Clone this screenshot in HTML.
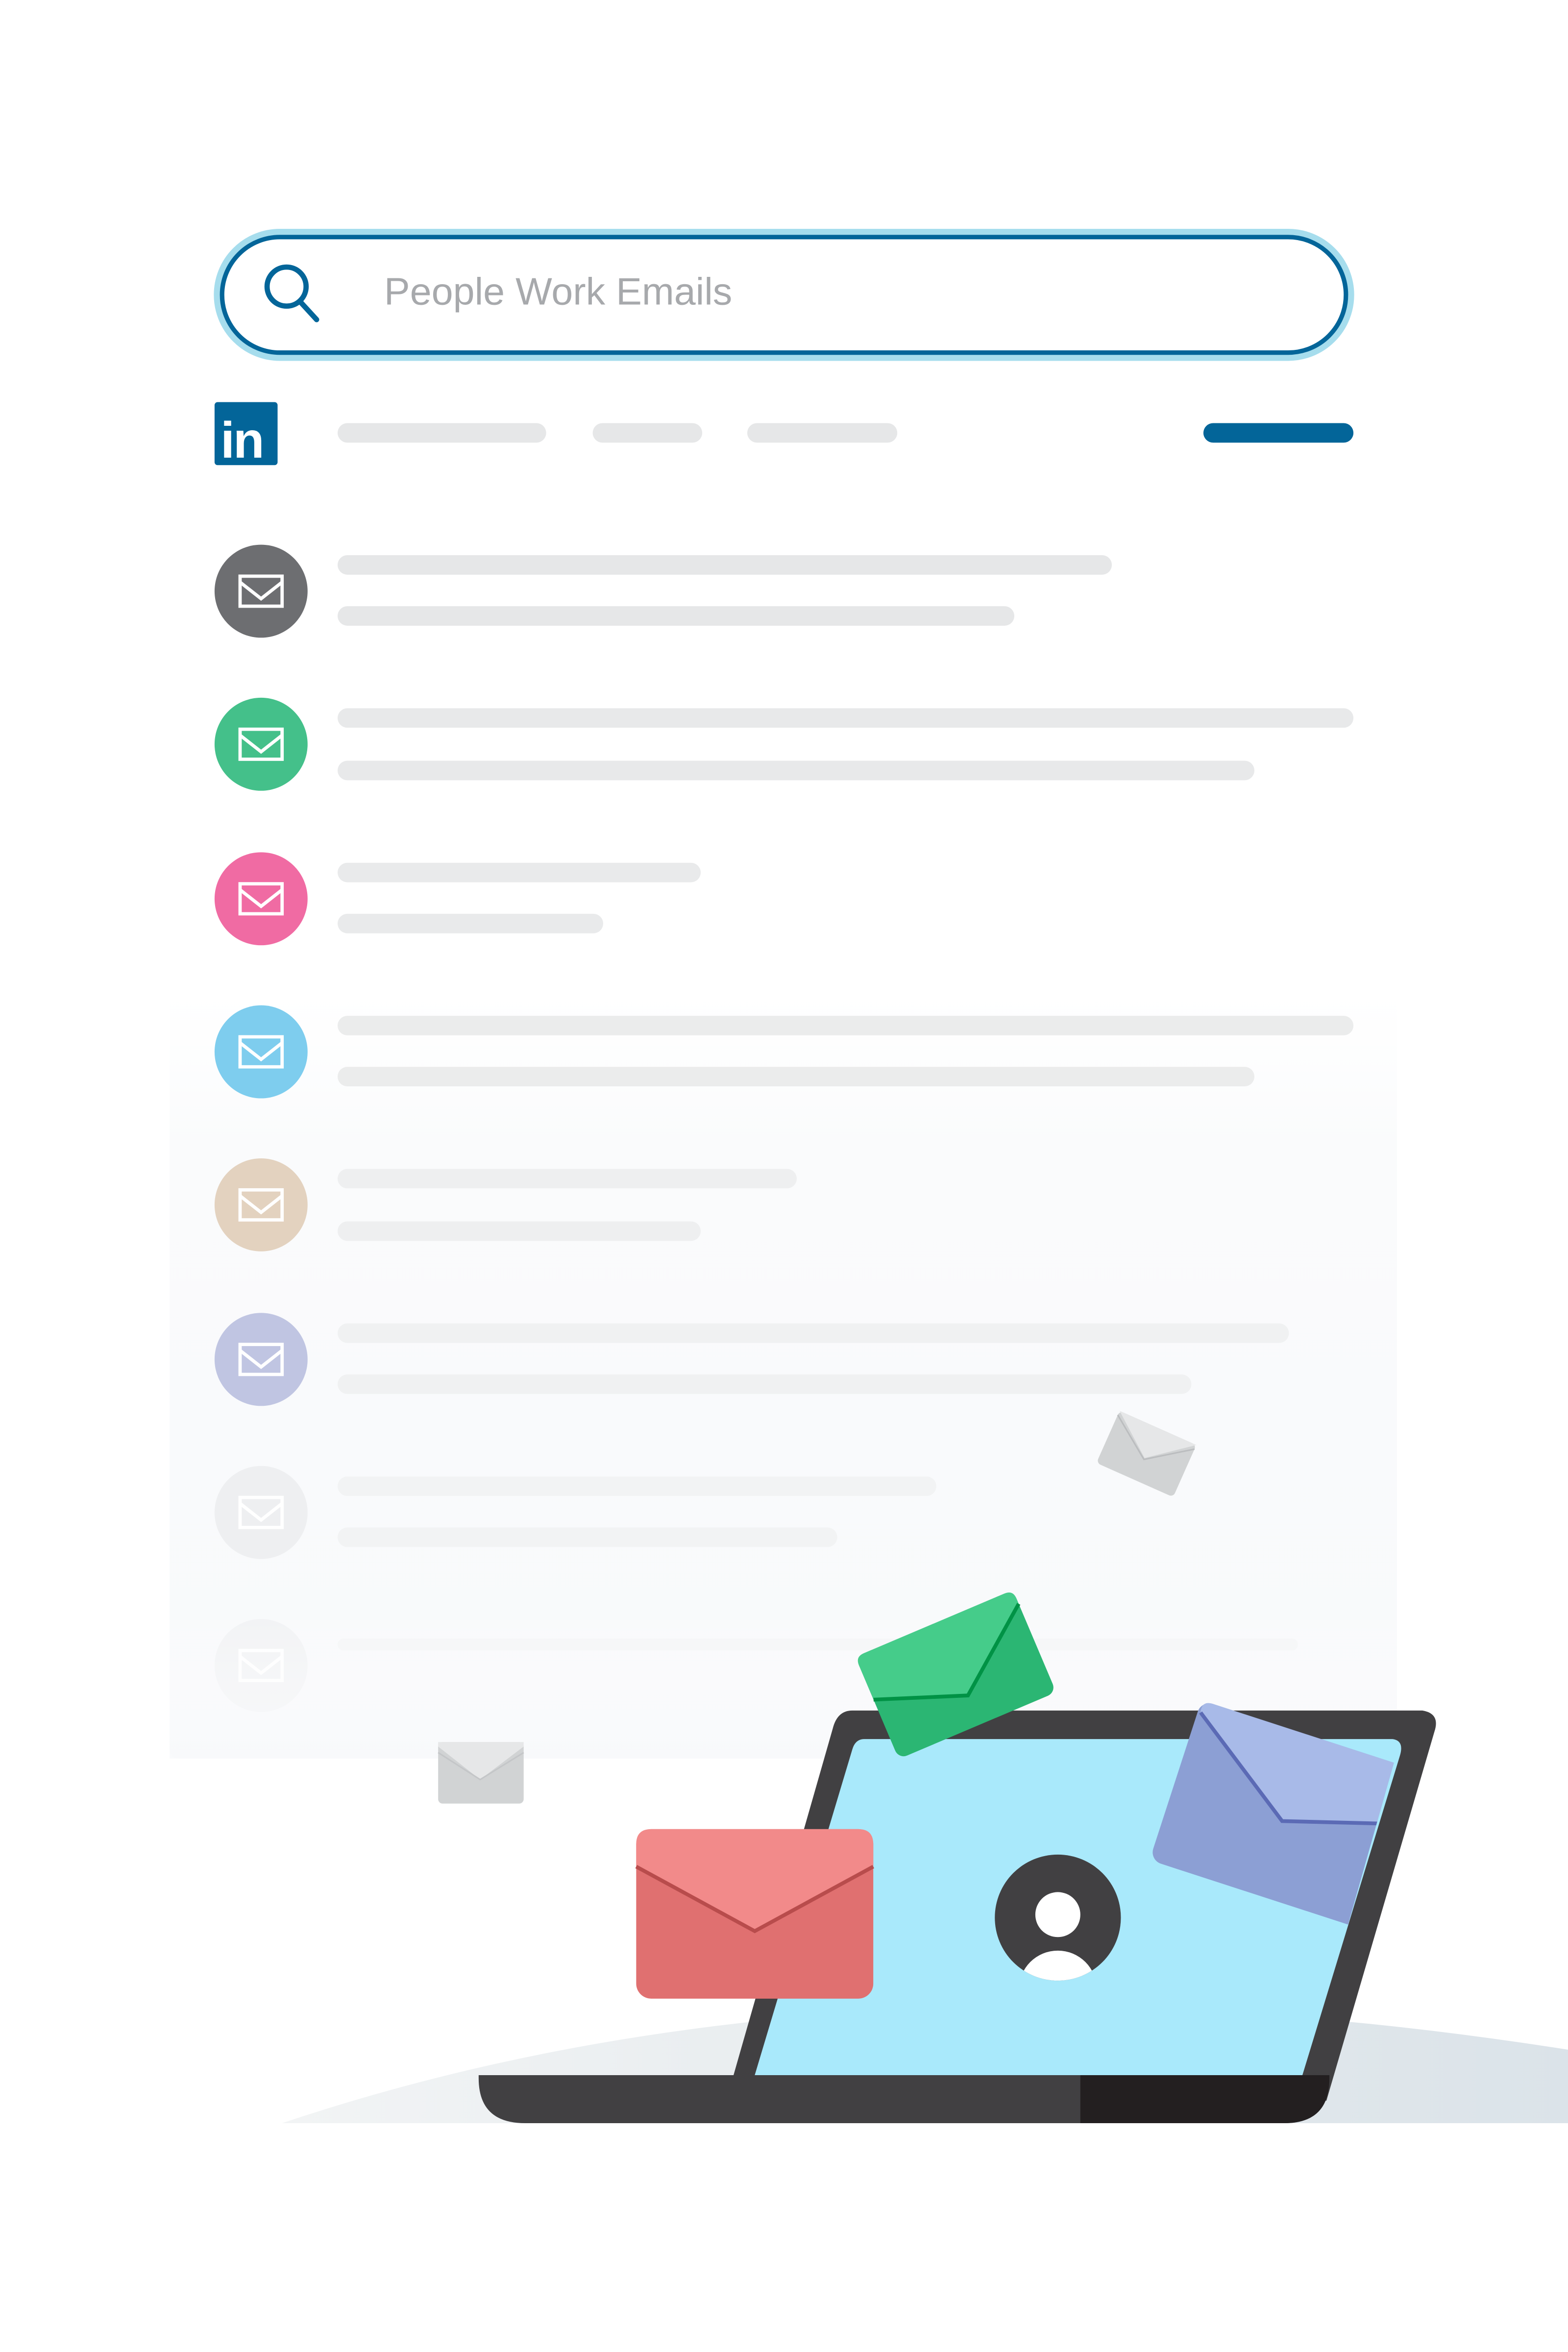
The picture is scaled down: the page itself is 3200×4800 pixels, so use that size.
<!DOCTYPE html>
<html><head><meta charset="utf-8"><style>html,body{margin:0;padding:0;background:#fff}svg{display:block}</style></head>
<body>
<svg width="3200" height="4800" viewBox="0 0 1045 1567.5" preserveAspectRatio="none" xmlns="http://www.w3.org/2000/svg">
<defs>
<linearGradient id="pan" x1="0" y1="0" x2="0" y2="1"><stop offset="0" stop-color="#fbfcfd" stop-opacity="0"/><stop offset="0.2" stop-color="#fafbfc"/><stop offset="1" stop-color="#f8f9fb"/></linearGradient>
<linearGradient id="gr" x1="0" y1="0" x2="1" y2="0"><stop offset="0" stop-color="#f2f4f5"/><stop offset="0.5" stop-color="#e6ebee"/><stop offset="1" stop-color="#dbe3e9"/></linearGradient>
<linearGradient id="fade" x1="0" y1="0" x2="0" y2="1"><stop offset="0" stop-color="#fff" stop-opacity="0"/><stop offset="1" stop-color="#f8f9fb" stop-opacity="0.85"/></linearGradient>
<clipPath id="av"><circle cx="705" cy="1278" r="42"/></clipPath>
<clipPath id="scr"><path d="M0,0 H1045 V1567 H0Z M936,1150 L870,1383 H1045 V1150Z" clip-rule="evenodd"/></clipPath>
<g id="env"><rect x="-14" y="-10" width="28" height="20" fill="none" stroke="#fff" stroke-width="2.2"/><path d="M-14,-6 L0,5 L14,-6" fill="none" stroke="#fff" stroke-width="2.2"/></g>
</defs>
<rect width="1045" height="1567.5" fill="#fff"/>
<rect x="113" y="660" width="818" height="512" rx="6" fill="url(#pan)"/>
<!-- search -->
<rect x="145" y="155" width="755" height="83" rx="41.5" fill="#fff" stroke="#a6dded" stroke-width="5"/>
<rect x="148" y="158" width="749" height="77" rx="38.5" fill="#fff" stroke="#036599" stroke-width="3"/>
<circle cx="191" cy="191" r="13" fill="none" stroke="#036599" stroke-width="3.5"/>
<line x1="200" y1="201" x2="211" y2="213" stroke="#036599" stroke-width="3.5" stroke-linecap="round"/>
<text x="256" y="203" font-family="Liberation Sans, sans-serif" font-size="25.5" fill="#a7a9ac" textLength="232" lengthAdjust="spacingAndGlyphs">People Work Emails</text>
<!-- linkedin -->
<rect x="143" y="268" width="42" height="42" rx="2" fill="#036599"/>
<text x="147" y="305" font-family="Liberation Sans, sans-serif" font-weight="bold" font-size="34" fill="#fff" letter-spacing="-1">in</text>
<g fill="#e6e7e8">
<rect x="225" y="282" width="139" height="13" rx="6.5"/><rect x="395" y="282" width="73" height="13" rx="6.5"/><rect x="498" y="282" width="100" height="13" rx="6.5"/>
</g>
<rect x="802" y="282" width="100" height="13" rx="6.5" fill="#036599"/>
<!-- rows -->
<g>
<circle cx="174" cy="394" r="31" fill="#6d6e71"/><use href="#env" x="174" y="394"/>
<rect x="225" y="370" width="516" height="13" rx="6.5" fill="#e6e7e8"/><rect x="225" y="404" width="451" height="13" rx="6.5" fill="#e6e7e8"/>
<circle cx="174" cy="496" r="31" fill="#44c08a"/><use href="#env" x="174" y="496"/>
<rect x="225" y="472" width="677" height="13" rx="6.5" fill="#e8e9ea"/><rect x="225" y="507" width="611" height="13" rx="6.5" fill="#e8e9ea"/>
<circle cx="174" cy="599" r="31" fill="#f06ba3"/><use href="#env" x="174" y="599"/>
<rect x="225" y="575" width="242" height="13" rx="6.5" fill="#e9eaeb"/><rect x="225" y="609" width="177" height="13" rx="6.5" fill="#e9eaeb"/>
<circle cx="174" cy="701" r="31" fill="#7ecdee"/><use href="#env" x="174" y="701"/>
<rect x="225" y="677" width="677" height="13" rx="6.5" fill="#ebecec"/><rect x="225" y="711" width="611" height="13" rx="6.5" fill="#ebecec"/>
<circle cx="174" cy="803" r="31" fill="#e3d2bf"/><use href="#env" x="174" y="803"/>
<rect x="225" y="779" width="306" height="13" rx="6.5" fill="#eeeff0"/><rect x="225" y="814" width="242" height="13" rx="6.5" fill="#eeeff0"/>
<circle cx="174" cy="906" r="31" fill="#c0c5e2"/><use href="#env" x="174" y="906"/>
<rect x="225" y="882" width="634" height="13" rx="6.5" fill="#f0f1f2"/><rect x="225" y="916" width="569" height="13" rx="6.5" fill="#f0f1f2"/>
<circle cx="174" cy="1008" r="31" fill="#eeeff1"/><use href="#env" x="174" y="1008"/>
<rect x="225" y="984" width="399" height="13" rx="6.5" fill="#f2f3f4"/><rect x="225" y="1018" width="333" height="13" rx="6.5" fill="#f2f3f4"/>
<circle cx="174" cy="1110" r="31" fill="#f1f2f4"/><use href="#env" x="174" y="1110"/>
<rect x="225" y="1092" width="640" height="8" rx="4" fill="#f4f5f6"/>
</g>
<rect x="113" y="1070" width="818" height="102" fill="url(#fade)"/>
<!-- small gray envelopes -->
<rect x="292" y="1161" width="57" height="41" rx="3" fill="#d1d3d4"/>
<path d="M292,1164 L320,1186 L349,1164 V1161 H292Z" fill="#e6e7e8"/>
<path d="M292,1168 L320,1186 L349,1168" fill="none" stroke="#c4c6c8" stroke-width="1"/>
<g transform="translate(764,969) rotate(24)">
<rect x="-28" y="-19" width="56" height="38" rx="3" fill="#d1d3d4"/>
<path d="M-28,-19 L0,3 L28,-19Z" fill="#e6e7e8"/>
<path d="M-28,-16 L0,4 L28,-16" fill="none" stroke="#bbbdbf" stroke-width="1"/>
</g>
<!-- ground -->
<path d="M188,1415 Q560,1290 1045,1366 L1045,1415 Z" fill="url(#gr)"/>
<!-- laptop -->
<path d="M568,1140 H948 Q960,1142 956,1154 L884,1400 H484 L555,1152 Q558,1140 568,1140Z" fill="#414042"/>
<path d="M576,1159 H928 Q936,1160 933,1170 L868,1383 H503 L568,1166 Q570,1159 576,1159Z" fill="#a9e9fb"/>
<path d="M319,1383 H886 V1385 Q886,1415 856,1415 H350 Q319,1415 319,1385Z" fill="#414042"/>
<path d="M720,1383 H886 V1385 Q886,1415 856,1415 H720Z" fill="#231f20"/>
<!-- avatar -->
<circle cx="705" cy="1278" r="42" fill="#414042"/>
<g clip-path="url(#av)"><circle cx="705" cy="1276" r="15" fill="#fff"/><ellipse cx="705" cy="1326" rx="26" ry="26" fill="#fff"/></g>
<!-- red envelope -->
<rect x="424" y="1219" width="158" height="113" rx="10" fill="#e07070"/>
<path d="M434,1219 H572 Q582,1219 582,1229 V1244 L503,1287 L424,1244 V1229 Q424,1219 434,1219Z" fill="#f28a8a"/>
<path d="M424,1244 L503,1287 L582,1244" fill="none" stroke="#b84c4c" stroke-width="2.5"/>
<!-- green envelope -->
<g transform="translate(637,1116) rotate(-23)">
<rect x="-57" y="-37" width="114" height="74" rx="6" fill="#2bb673"/>
<path d="M-51,-37 H51 Q57,-37 57,-31 V-27 L2,16 L-57,-6 V-31 Q-57,-37 -51,-37Z" fill="#45cc8a"/>
<path d="M-57,-6 L2,16 L57,-27" fill="none" stroke="#009245" stroke-width="2.5"/>
</g>
<!-- purple envelope -->
<g clip-path="url(#scr)">
<g transform="translate(850,1208) rotate(18)">
<rect x="-70" y="-56" width="150" height="112" rx="8" fill="#8c9fd4"/>
<path d="M-62,-56 H72 Q80,-56 80,-48 V-18 L6,4 L-68,-48 Q-70,-56 -62,-56Z" fill="#a8bae8"/>
<path d="M-68,-48 L6,4 L80,-18" fill="none" stroke="#5b6ab5" stroke-width="2.5"/>
</g>
</g>
</svg>
</body></html>
